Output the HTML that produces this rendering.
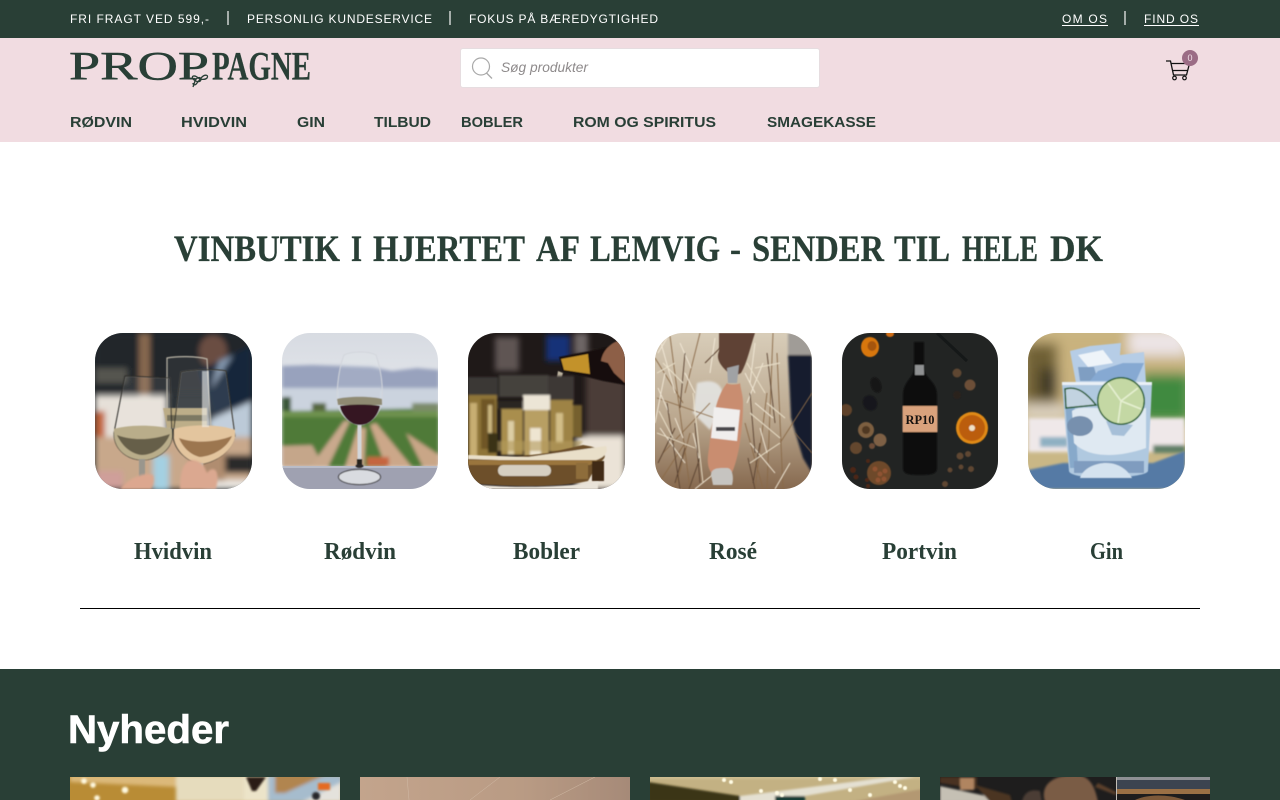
<!DOCTYPE html>
<html lang="da"><head><meta charset="utf-8"><title>Proppagne</title>
<style>
html,body{margin:0;padding:0;width:1280px;height:800px;overflow:hidden;background:#fff}
.a{position:absolute}
.im{position:absolute;top:333px;width:157px;height:156px;border-radius:28px;overflow:hidden}
.im svg,.b svg{display:block}
.b{position:absolute;top:777px;width:270px;height:23px;overflow:hidden}
#t text{white-space:pre}
.s{font-family:"Liberation Sans",sans-serif}
.f{font-family:"Liberation Serif",serif;font-weight:700}
</style></head><body>
<div class="a" style="left:0;top:0;width:1280px;height:38px;background:#293f36"></div>
<div class="a" style="left:0;top:38px;width:1280px;height:104px;background:#f1dce1"></div>
<div class="a" style="left:0;top:669px;width:1280px;height:131px;background:#293f36"></div>
<div class="a" style="left:80px;top:608px;width:1120px;height:1px;background:#000"></div>
<div class="a" style="left:460px;top:48px;width:358px;height:38px;background:#fff;border:1px solid #e6dde0;border-radius:3px"></div>

<svg width="0" height="0" style="position:absolute"><defs>
<filter id="b6" x="-30%" y="-30%" width="160%" height="160%"><feGaussianBlur stdDeviation="6"/></filter>
<filter id="b3" x="-30%" y="-30%" width="160%" height="160%"><feGaussianBlur stdDeviation="3"/></filter>
<filter id="b2" x="-30%" y="-30%" width="160%" height="160%"><feGaussianBlur stdDeviation="1.800"/></filter>
<filter id="b1" x="-30%" y="-30%" width="160%" height="160%"><feGaussianBlur stdDeviation="1"/></filter>
<filter id="b0" x="-30%" y="-30%" width="160%" height="160%"><feGaussianBlur stdDeviation=".6"/></filter>
<linearGradient id="st" x1="0" x2="0" y1="0" y2="1"><stop offset="0" stop-color="#d8cdb9"/><stop offset=".55" stop-color="#bba88f"/><stop offset="1" stop-color="#86694f"/></linearGradient>
<linearGradient id="sk" x1="0" x2="0" y1="0" y2="1"><stop offset="0" stop-color="#d7dbe2"/><stop offset=".5" stop-color="#e6e8ec"/><stop offset="1" stop-color="#dfe2e8"/></linearGradient>
</defs></svg>

<!-- image 1 -->
<div class="im" style="left:95px"><svg width="157" height="156" viewBox="0 0 157 156">
<rect width="157" height="156" fill="#22282c"/>
<g filter="url(#b3)">
<rect x="0" y="0" width="157" height="60" fill="#20262a"/>
<rect x="44" y="0" width="11" height="70" fill="#86684f"/>
<rect x="0" y="35" width="32" height="15" fill="#55554f"/>
<ellipse cx="118" cy="18" rx="14" ry="16" fill="#6a4d42"/>
<path d="M104 38L157 12V80L118 85Z" fill="#18253a"/>
<path d="M124 28L138 22L116 56Z" fill="#8397af"/>
<rect x="0" y="62" width="72" height="44" fill="#e6e0d8"/>
<rect x="0" y="78" width="10" height="28" fill="#c2653a"/>
<path d="M112 88L157 68V112L122 112Z" fill="#bccad8"/>
<rect x="0" y="104" width="157" height="52" fill="#c8a88b"/>
<rect x="58" y="122" width="16" height="36" fill="#a4d0e2"/>
<rect x="128" y="122" width="29" height="18" fill="#2b2a2c"/>
<rect x="0" y="138" width="28" height="18" fill="#cf9f9a"/>
<rect x="110" y="147" width="47" height="9" fill="#ebe7e1"/>
<rect x="95" y="108" width="35" height="40" fill="#b08d6f"/>
</g>
<g filter="url(#b0)">
<path d="M72 25C82 23 102 23 112 26L116 95L72 95Z" fill="#fff" fill-opacity=".05" stroke="#b9b4a6" stroke-width="1.200"/>
<path d="M68 75H112V95H72Z" fill="#b6a57c"/>
<path d="M72 82H112V88H72Z" fill="#6f6a52"/>
<path d="M30 43L75 45L77 104C76 118 60 127 47 127C30 126 19 115 19 100Z" fill="#fff" fill-opacity=".08" stroke="#2f2e2a" stroke-width="1.100"/>
<path d="M19 96C35 91 62 92 77 96V104C76 118 60 127 47 127C30 126 19 115 19 100Z" fill="#b9ad8a"/>
<path d="M22 102C38 108 58 107 75 101C70 114 58 122 47 122C36 121 27 113 22 102Z" fill="#665f49"/>
<rect x="44" y="126" width="6" height="24" fill="#9a968d"/>
<path d="M86 39C100 36 120 36 131 38L140 103C136 120 118 130 105 131C92 128 80 118 78 103Z" fill="#fff" fill-opacity=".1" stroke="#3a372f" stroke-width="1.100"/>
<path d="M79 96C95 91 125 91 140 97V105C136 120 118 130 105 131C92 128 81 118 79 105Z" fill="#e3c59e"/>
<path d="M84 105C100 111 122 109 137 103C132 115 118 123 105 124C96 122 88 115 84 105Z" fill="#9c7650"/>
<rect x="107" y="38" width="7" height="56" fill="#f0f0ec" fill-opacity=".6"/>
<rect x="102" y="130" width="6" height="14" fill="#c1bbae"/>
</g>
<g filter="url(#b1)">
<path d="M85 156C85 140 88 128 97 127C108 128 110 135 112 140C118 132 126 136 121 156Z" fill="#dba890"/>
<path d="M25 156C32 146 50 138 58 142C60 148 58 152 56 156Z" fill="#dca78f"/>
</g>
</svg></div>

<!-- image 2 -->
<div class="im" style="left:282px;width:156px"><svg width="157" height="156" viewBox="0 0 157 156">
<rect width="157" height="156" fill="url(#sk)"/>
<g filter="url(#b2)">
<path d="M0 33L30 32L60 33L90 34L110 38L135 35L157 37V56H0Z" fill="#98a2bd"/>
<rect y="55" width="157" height="23" fill="#cbd3de"/>
<path d="M0 78L157 75V134H0Z" fill="#4f7a37"/>
<rect x="0" y="64" width="9" height="14" fill="#3b5638"/>
<rect x="30" y="70" width="14" height="8" fill="#56683f"/>
<rect x="130" y="70" width="27" height="8" fill="#7b8b6a"/>
<path d="M0 113L30 112L42 134H0Z" fill="#c5a68a"/>
<path d="M62 88L68 88L46 134H28Z" fill="#c9a98d"/>
<path d="M76 95L84 95L82 134H63Z" fill="#cdaa8c"/>
<path d="M88 92L94 90L130 134H104Z" fill="#cca789"/>
<path d="M124 100L157 122V134H141Z" fill="#c9a687"/>
<rect x="85" y="124" width="22" height="9" fill="#c6653f"/>
<rect x="0" y="78" width="157" height="6" fill="#6f9350"/>
</g>
<rect y="133" width="157" height="23" fill="#9fa1b1"/>
<rect y="133" width="157" height="2" fill="#b9bcc8"/>
<g filter="url(#b0)">
<path d="M62 22C70 18 87 18 94 22C100 40 101 56 100 68C98 80 90 91 78 92C66 91 57 80 55 68C55 50 57 35 62 22Z" fill="#e9edf2" fill-opacity=".12" stroke="#d2d5db" stroke-width="1"/>
<rect x="57" y="55" width="41" height="12" fill="#cbd2dd" fill-opacity=".7"/>
<path d="M55 66C65 63 90 63 100 66L100 72H56Z" fill="#8f8a72"/>
<path d="M58 73C70 71 88 71 98 73C96 83 88 92 78 92C68 92 60 83 58 73Z" fill="#351722"/>
<rect x="75.500" y="92" width="4" height="40" fill="#d3d5da"/>
<rect x="75" y="126" width="5" height="6" fill="#25211f"/>
<ellipse cx="77.500" cy="144" rx="21" ry="7.500" fill="#d9dbe0" stroke="#2d2c2e" stroke-width="1"/>
<ellipse cx="77.500" cy="133" rx="4" ry="2" fill="#2b2726"/>
</g>
</svg></div>

<!-- image 3 -->
<div class="im" style="left:468px"><svg width="157" height="156" viewBox="0 0 157 156">
<rect width="157" height="156" fill="#1f1918"/>
<g filter="url(#b3)">
<rect x="27" y="4" width="24" height="34" fill="#5e5553"/>
<rect x="78" y="2" width="24" height="26" fill="#143378"/>
<rect x="118" y="20" width="39" height="85" fill="#4c3e37"/>
<rect x="106" y="0" width="14" height="22" fill="#6d6565"/>
<rect x="108" y="103" width="49" height="53" fill="#ebe3d7"/>
</g>
<g filter="url(#b0)">
<path d="M91 24L122 18L157 10V52L135 48L95 38Z" fill="#14100d"/>
<path d="M93 26L120 21L122 41L96 37Z" fill="#c3922a"/>
<path d="M133 28C135 15 147 7 153 8L157 20V50L146 40L140 30Z" fill="#8d5e46"/>
<path d="M90 38L95 40L89 62H86Z" fill="#bfb6a2"/>
</g>
<g filter="url(#b1)">
<rect x="0" y="44" width="30" height="22" fill="#3b3935"/>
<rect x="31" y="42" width="50" height="22" fill="#45433e"/>
<rect x="80" y="43" width="26" height="26" fill="#3c3934"/>
<rect x="0" y="62" width="29" height="66" fill="#8f7437"/>
<rect x="2" y="70" width="7" height="55" fill="#c7ae72"/>
<rect x="13" y="66" width="14" height="50" fill="#6f5726"/>
<rect x="20" y="72" width="4" height="30" fill="#cbb67f"/>
<rect x="30" y="68" width="24" height="8" fill="#2b2620"/>
<rect x="33" y="76" width="22" height="46" fill="#a98e4d"/>
<rect x="40" y="88" width="6" height="34" fill="#dccda4"/>
<rect x="55" y="62" width="27" height="15" fill="#ece5d6"/>
<rect x="56" y="77" width="25" height="46" fill="#b89f63"/>
<rect x="62" y="95" width="11" height="30" fill="#eee5d1"/>
<rect x="82" y="67" width="23" height="52" fill="#9e8345"/>
<rect x="88" y="80" width="7" height="30" fill="#d2bd87"/>
<rect x="105" y="72" width="9" height="32" fill="#76602d"/>
<rect x="20" y="100" width="10" height="20" fill="#3b3016"/>
<path d="M30 108H115L108 118H30Z" fill="#b29a5c" fill-opacity=".6"/>
</g>
<g filter="url(#b0)">
<path d="M0 124H45L80 120L115 112C142 116 140 126 130 130L120 148C90 155 40 154 0 150Z" fill="#6d5029"/>
<path d="M0 122L60 124L138 113C141 120 135 125 128 127L65 128L0 126Z" fill="#e9dfc9"/>
<path d="M0 127H130L122 132H0Z" fill="#9a753d"/>
<rect x="30" y="132" width="53" height="11" rx="5" fill="#d6cfc1"/>
<rect x="124" y="128" width="12" height="20" fill="#3f2b12"/>
<rect x="108" y="130" width="12" height="16" fill="#8e6d3a"/>
<path d="M0 151C40 155 90 155 130 149L130 156H0Z" fill="#e9e3d9"/>
</g>
</svg></div>

<!-- image 4 -->
<div class="im" style="left:655px"><svg width="157" height="156" viewBox="0 0 157 156">
<rect width="157" height="156" fill="url(#st)"/>
<g filter="url(#b1)">
<rect x="133" y="0" width="24" height="24" fill="#a09c97"/>
<path d="M133 22H157V140L148 125L136 85Z" fill="#171d2d"/>
<path d="M42 50C60 45 68 50 70 70L55 97L38 80Z" fill="#e5e6e5" fill-opacity=".85"/>
</g>
<g stroke-width=".9" fill="none" filter="url(#b0)">
<path d="M15 3L35 156M45 0L30 60M2 65L60 85M8 120L55 70M20 156L35 100M90 90L108 156M100 156L112 60M118 0L112 156M122 20L128 156M125 110L157 60M140 100L157 120M0 25L28 70M4 150L30 110" stroke="#8a6a48"/>
<path d="M6 10L20 60M10 40L0 90M25 10L36 35M60 5L55 40M100 10L95 50M108 30L92 70M5 95L30 130M95 110L120 140M135 130L120 156M60 140L40 156M3 20L12 5M30 40L40 60M90 40L100 60M100 70L118 85M105 95L112 120M3 55L14 80M20 85L28 105M38 100L44 125" stroke="#f3ead8"/>
<path d="M12 70L25 156M30 20L25 75M40 90L45 150M95 60L100 120M3 130L20 95M105 110L98 150M112 20L120 90M70 10L50 30M80 20L95 5M30 115L20 150M45 125L34 156M93 125L100 156" stroke="#5a4230"/>
<path d="M2 40L20 30M38 60L48 150M2 100L40 115M92 30L110 60M95 130L125 110M112 70L130 85M4 78L18 105M8 30L28 50M100 35L125 30M95 80L125 105" stroke="#ece2cb"/>
</g>
<g filter="url(#b0)">
<path d="M64 0H100C95 15 92 30 86 40L78 44C68 35 60 28 64 18Z" fill="#5e4234"/>
<path d="M72 35L84 32L82 50H73Z" fill="#a0a2a5"/>
<path d="M72 50C72 52 84 52 85 50C86 58 88 62 88 70C88 95 84 125 76 142H58C52 135 52 128 54 115C57 90 60 65 72 50Z" fill="#c98d70"/>
<path d="M59 74L85 77L82 108L56 105Z" fill="#f0eeed"/>
<rect x="61" y="94" width="19" height="4" fill="#4c4a4e"/>
<path d="M56 142C56 134 66 135 72 135C78 135 79 146 77 152H58Z" fill="#c6c4c0"/>
</g>
</svg></div>

<!-- image 5 -->
<div class="im" style="left:842px;width:156px"><svg width="157" height="156" viewBox="0 0 157 156">
<rect width="157" height="156" fill="#222423"/>
<path d="M95 0L125 28" stroke="#151818" stroke-width="3" fill="none"/>
<g filter="url(#b0)">
<ellipse cx="28" cy="14" rx="9" ry="10" fill="#d8770f"/><ellipse cx="30" cy="13" rx="4.500" ry="5" fill="#a5540f"/>
<ellipse cx="48" cy="1" rx="4" ry="3" fill="#cf6d14"/>
<ellipse cx="34" cy="52" rx="5" ry="8" fill="#131212" transform="rotate(-20 34 52)"/>
<ellipse cx="28" cy="70" rx="7" ry="8" fill="#15161a" transform="rotate(-30 28 70)"/>
<circle cx="4" cy="77" r="6" fill="#5e4229"/>
<circle cx="24" cy="97" r="8" fill="#7d5f41"/><circle cx="24" cy="97" r="4" fill="#4f3823"/>
<circle cx="38" cy="107" r="6.500" fill="#7e6145"/>
<circle cx="14" cy="115" r="6" fill="#64462f"/>
<circle cx="30" cy="113" r="3" fill="#6e4e38"/>
<circle cx="37" cy="140" r="12" fill="#6e482b"/>
<g fill="#8f5230"><circle cx="33" cy="136" r="2.500"/><circle cx="38" cy="141" r="2.500"/><circle cx="43" cy="138" r="2.500"/><circle cx="36" cy="147" r="2.500"/><circle cx="42" cy="146" r="2.500"/></g>
<g fill="#4e2718"><circle cx="11" cy="137" r="3"/><circle cx="14" cy="144" r="2.500"/><circle cx="26" cy="128" r="2"/><circle cx="25" cy="147" r="2"/><circle cx="26" cy="153" r="2"/></g>
<circle cx="115" cy="40" r="4.500" fill="#5f4731"/>
<circle cx="128" cy="52" r="5.500" fill="#6d4f37"/>
<circle cx="115" cy="62" r="4" fill="#2c241e"/>
<g fill="#5f4632"><circle cx="118" cy="123" r="3.500"/><circle cx="126" cy="121" r="3"/><circle cx="129" cy="136" r="3"/><circle cx="119" cy="134" r="2.500"/><circle cx="108" cy="137" r="2.500"/><circle cx="103" cy="151" r="3"/></g>
<circle cx="130" cy="95" r="16" fill="#e08a14"/><circle cx="130" cy="95" r="13" fill="#bb5d10"/><circle cx="130" cy="95" r="3" fill="#f1e2c6"/>
<path d="M72 9H82V35C82 45 95 48 95 62V135C95 141 90 142 78 142C66 142 61 141 61 135V62C61 48 72 45 72 35Z" fill="#0c0e10"/>
<rect x="73" y="32" width="9" height="10" fill="#8f9192"/>
<rect x="60.500" y="73" width="35" height="26" fill="#d9a27b"/>
</g>
<text x="78" y="91" text-anchor="middle" font-family="Liberation Serif,serif" font-weight="700" font-size="13" textLength="29" lengthAdjust="spacingAndGlyphs" fill="#17120f">RP10</text>
</svg></div>

<!-- image 6 -->
<div class="im" style="left:1028px"><svg width="157" height="156" viewBox="0 0 157 156">
<rect width="157" height="156" fill="#c9b786"/>
<g filter="url(#b6)">
<rect width="157" height="85" fill="#c9b27e"/>
<rect x="-5" y="10" width="35" height="60" fill="#6f6035"/>
<rect x="12" y="35" width="18" height="30" fill="#3a3525"/>
<rect x="100" y="-5" width="60" height="28" fill="#ece4e5"/>
<rect x="112" y="40" width="50" height="48" fill="#3f8a3f"/>
<rect x="-5" y="72" width="45" height="14" fill="#ddd3c4"/>
</g>
<g filter="url(#b2)">
<rect y="85" width="157" height="34" fill="#efe8e9"/>
<rect x="12" y="104" width="28" height="10" fill="#8fb0c2"/>
<rect x="125" y="112" width="32" height="8" fill="#5f7f66"/>
</g>
<g filter="url(#b1)"><path d="M0 137L35 130H125L157 118V156H0Z" fill="#557aa5"/></g>
<g filter="url(#b0)">
<path d="M42 18L62 13L93 10L92 22L116 19L118 50H48Z" fill="#b6cde6"/>
<path d="M50 22L75 17L85 30L60 34Z" fill="#eef4f9"/>
<path d="M50 34L66 34L70 48H52Z" fill="#7f9ec2"/>
<path d="M70 38L95 30L116 30L108 48H62Z" fill="#86a9d2"/>
<path d="M34 50H124L120 138C118 146 42 148 41 138Z" fill="#b0c9e0"/>
<path d="M36 55L42 135H50L46 60Z" fill="#87a9ca"/>
<path d="M44 78C55 70 85 80 118 75V115C90 125 60 125 46 110Z" fill="#dfe9f2"/>
<ellipse cx="52" cy="93" rx="13" ry="10" fill="#7790ae"/>
<path d="M78 88L105 92L96 103L84 102Z" fill="#a6bfd8"/>
<path d="M46 128H116V140H46Z" fill="#7f9cbf"/>
<path d="M52 145C55 135 68 130 78 130C92 130 100 138 104 145Z" fill="#d4e2ef"/>
<rect x="34" y="49" width="90" height="3" fill="#eaf0f6"/>
<path d="M37 56C50 52 60 62 68 72L38 75Z" fill="#c2d3e0" stroke="#1f5a2c" stroke-width="1.500"/>
<circle cx="93" cy="68" r="24" fill="#1f5e2e"/>
<circle cx="93" cy="68" r="22.500" fill="#c4d8a4"/>
<path d="M93 68L80 50M93 68L110 55M93 68L113 76M93 68L90 90" stroke="#e6f0d2" stroke-width="1.500"/>
</g>
</svg></div>

<!-- bottom images -->
<div class="b" style="left:70px"><svg width="270" height="23" viewBox="0 0 270 23">
<rect width="270" height="23" fill="#b98c35"/>
<g filter="url(#b2)">
<path d="M0 -2H108V10L0 5Z" fill="#dcb97a"/>
<rect x="106" y="-2" width="68" height="27" fill="#e6dcbd"/>
<rect x="174" y="-2" width="24" height="27" fill="#ece4c9"/>
<path d="M198 -2H272V25H198Z" fill="#a6bccd"/>
<path d="M205 -2H255L215 16H205Z" fill="#b18550"/>
<path d="M232 25L272 5V25Z" fill="#e4e2dc"/>
</g>
<g filter="url(#b1)">
<path d="M176 0H196L186 14H182Z" fill="#2a1f14"/>
<circle cx="246" cy="19" r="4" fill="#28282b"/>
<rect x="248" y="6" width="12" height="7" fill="#e56a22"/>
<g fill="#fff9e0"><circle cx="14" cy="4" r="2.800"/><circle cx="23" cy="8" r="2.800"/><circle cx="55" cy="13" r="3.300"/><circle cx="27" cy="21" r="2.800"/></g>
</g></svg></div>
<div class="b" style="left:360px"><svg width="270" height="23" viewBox="0 0 270 23">
<defs><linearGradient id="g2" x1="0" x2="1"><stop offset="0" stop-color="#c3a48c"/><stop offset=".6" stop-color="#b99b84"/><stop offset="1" stop-color="#a68a78"/></linearGradient></defs>
<rect width="270" height="23" fill="url(#g2)"/>
<path d="M47 0L49 23M140 0L110 23M235 0L190 23" stroke="#d0baa6" stroke-width=".5" fill="none"/>
</svg></div>
<div class="b" style="left:650px"><svg width="270" height="23" viewBox="0 0 270 23">
<rect width="270" height="23" fill="#c3b183"/>
<g filter="url(#b1)">
<path d="M-2 5L90 19V25H-2Z" fill="#3a3419"/>
<path d="M0 -2H272V2H0Z" fill="#cdbd92"/>
<path d="M90 19L240 0H265L120 25H90Z" fill="#e4e0d2"/>
<rect x="125" y="19" width="30" height="6" fill="#193a36"/>
<path d="M200 25L272 12V25Z" fill="#b39872"/>
</g>
<g fill="#fffbe4" filter="url(#b0)"><circle cx="74" cy="3" r="2"/><circle cx="81" cy="5" r="2"/><circle cx="111" cy="14" r="2"/><circle cx="127" cy="16" r="2"/><circle cx="132" cy="18" r="2"/><circle cx="170" cy="2" r="2"/><circle cx="185" cy="3" r="2"/><circle cx="200" cy="13" r="2"/><circle cx="220" cy="18" r="2"/><circle cx="245" cy="5" r="2"/><circle cx="250" cy="9" r="2"/><circle cx="255" cy="11" r="2"/></g>
</svg></div>
<div class="b" style="left:940px"><svg width="270" height="23" viewBox="0 0 270 23">
<rect width="270" height="23" fill="#1e1d1d"/>
<g filter="url(#b1)">
<path d="M0 0H37V12L0 6Z" fill="#4a3120"/>
<rect x="20" y="1" width="14" height="12" fill="#b08560"/>
<path d="M0 9L60 22V25H0Z" fill="#c5c0b4"/>
<path d="M35 8L70 18L72 25H50Z" fill="#4b3524"/>
<path d="M105 25C100 10 110 -2 135 -2C150 -2 155 10 158 25Z" fill="#7a5b44"/>
<path d="M82 25C84 14 92 12 100 14L102 25Z" fill="#4c3e34"/>
<path d="M158 6L176 15V18L155 10Z" fill="#5c412c"/>
</g>
<rect x="177" y="0" width="93" height="3" fill="#8e9094"/>
<rect x="177" y="3" width="93" height="9" fill="#3c4450"/>
<path d="M177 12H270V17H177Z" fill="#9a7045"/>
<path d="M195 23C205 18 225 16 245 23Z" fill="#7d5a3a"/>
<rect x="176" y="0" width="1" height="23" fill="#c2bdb6"/>
</svg></div>

<!-- text layer -->
<svg id="t" class="a" style="left:0;top:0" width="1280" height="800" viewBox="0 0 1280 800">
<g class="s" font-size="12" fill="#fff">
<text x="70" y="23" textLength="139" lengthAdjust="spacing">FRI FRAGT VED 599,-</text>
<text x="247" y="23" textLength="185" lengthAdjust="spacing">PERSONLIG KUNDESERVICE</text>
<text x="469" y="23" textLength="189" lengthAdjust="spacing">FOKUS PÅ BÆREDYGTIGHED</text>
<text x="1062" y="23" textLength="45" lengthAdjust="spacing">OM OS</text>
<text x="1144" y="23" textLength="54" lengthAdjust="spacing">FIND OS</text>
</g>
<g fill="#fff"><rect x="1062" y="25" width="46" height="1"/><rect x="1144" y="25" width="55" height="1"/></g>
<g fill="#a5aeaa"><rect x="227" y="11" width="2" height="14"/><rect x="449" y="11" width="2" height="14"/><rect x="1124" y="11" width="2" height="14"/></g>

<!-- logo -->
<g fill="#293f36" stroke="#293f36">
<text class="f" x="69" y="79.500" font-size="40" style="font-weight:400" stroke-width=".5" textLength="140" lengthAdjust="spacingAndGlyphs">PROP</text>
<text class="f" x="212" y="79.500" font-size="40" stroke-width=".2" textLength="99" lengthAdjust="spacingAndGlyphs">PAGNE</text>
</g>
<path d="M193 87L195 81C196 78 200 76 201 79C201 83 196 82 193 79C191 76 194 75 197 77C200 80 205 80 207 78C209 75 205 74 202 77L197 83C195 86 193 85 193 83" fill="none" stroke="#293f36" stroke-width="1.300"/>

<!-- search -->
<circle cx="481" cy="66.500" r="8.500" fill="none" stroke="#a9a9a9" stroke-width="1.200"/>
<path d="M486.500 73L492 78.500" stroke="#a9a9a9" stroke-width="1.300"/>
<text class="s" x="501" y="72" font-size="14" font-style="italic" fill="#8e8a8b" textLength="87" lengthAdjust="spacingAndGlyphs">Søg produkter</text>

<!-- cart -->
<path d="M1166 61H1170.500L1173.500 75H1186.500L1189.500 63.500H1171M1172.500 70.500H1187.500" fill="none" stroke="#111" stroke-width="1.300"/>
<circle cx="1174.500" cy="78" r="1.800" fill="none" stroke="#111" stroke-width="1.200"/>
<circle cx="1184.500" cy="78" r="1.800" fill="none" stroke="#111" stroke-width="1.200"/>
<circle cx="1190" cy="58" r="8" fill="#9b6c85"/>
<text class="s" x="1190" y="61" font-size="9" text-anchor="middle" fill="#f0dfe6">0</text>

<!-- nav -->
<g class="s" font-size="15" font-weight="700" fill="#293f36">
<text x="70" y="127" textLength="62" lengthAdjust="spacingAndGlyphs">RØDVIN</text>
<text x="181" y="127" textLength="66" lengthAdjust="spacingAndGlyphs">HVIDVIN</text>
<text x="297" y="127" textLength="28" lengthAdjust="spacingAndGlyphs">GIN</text>
<text x="374" y="127" textLength="57" lengthAdjust="spacingAndGlyphs">TILBUD</text>
<text x="461" y="127" textLength="62" lengthAdjust="spacingAndGlyphs">BOBLER</text>
<text x="573" y="127" textLength="143" lengthAdjust="spacingAndGlyphs">ROM OG SPIRITUS</text>
<text x="767" y="127" textLength="109" lengthAdjust="spacingAndGlyphs">SMAGEKASSE</text>
</g>

<g class="f" font-size="37" fill="#293f36" stroke="#293f36" stroke-width=".3">
<text x="174" y="261" textLength="166" lengthAdjust="spacingAndGlyphs">VINBUTIK</text>
<text x="351" y="261" textLength="11" lengthAdjust="spacingAndGlyphs">I</text>
<text x="373" y="261" textLength="152" lengthAdjust="spacingAndGlyphs">HJERTET</text>
<text x="536" y="261" textLength="44" lengthAdjust="spacingAndGlyphs">AF</text>
<text x="590" y="261" textLength="130" lengthAdjust="spacingAndGlyphs">LEMVIG</text>
<text x="730" y="261" textLength="11" lengthAdjust="spacingAndGlyphs">-</text>
<text x="752" y="261" textLength="132" lengthAdjust="spacingAndGlyphs">SENDER</text>
<text x="894" y="261" textLength="56" lengthAdjust="spacingAndGlyphs">TIL</text>
<text x="962" y="261" textLength="76" lengthAdjust="spacingAndGlyphs">HELE</text>
<text x="1050" y="261" textLength="53" lengthAdjust="spacingAndGlyphs">DK</text>
</g>

<g class="f" font-size="24" fill="#293f36">
<text x="134" y="559" textLength="78" lengthAdjust="spacingAndGlyphs">Hvidvin</text>
<text x="324" y="559" textLength="72" lengthAdjust="spacingAndGlyphs">Rødvin</text>
<text x="513" y="559" textLength="67" lengthAdjust="spacingAndGlyphs">Bobler</text>
<text x="709" y="559" textLength="48" lengthAdjust="spacingAndGlyphs">Rosé</text>
<text x="882" y="559" textLength="75" lengthAdjust="spacingAndGlyphs">Portvin</text>
<text x="1090" y="559" textLength="33" lengthAdjust="spacingAndGlyphs">Gin</text>
</g>

<text class="s" x="68" y="743" font-size="40" font-weight="700" fill="#fff" stroke="#fff" stroke-width=".6" textLength="161" lengthAdjust="spacingAndGlyphs">Nyheder</text>
</svg>
</body></html>
